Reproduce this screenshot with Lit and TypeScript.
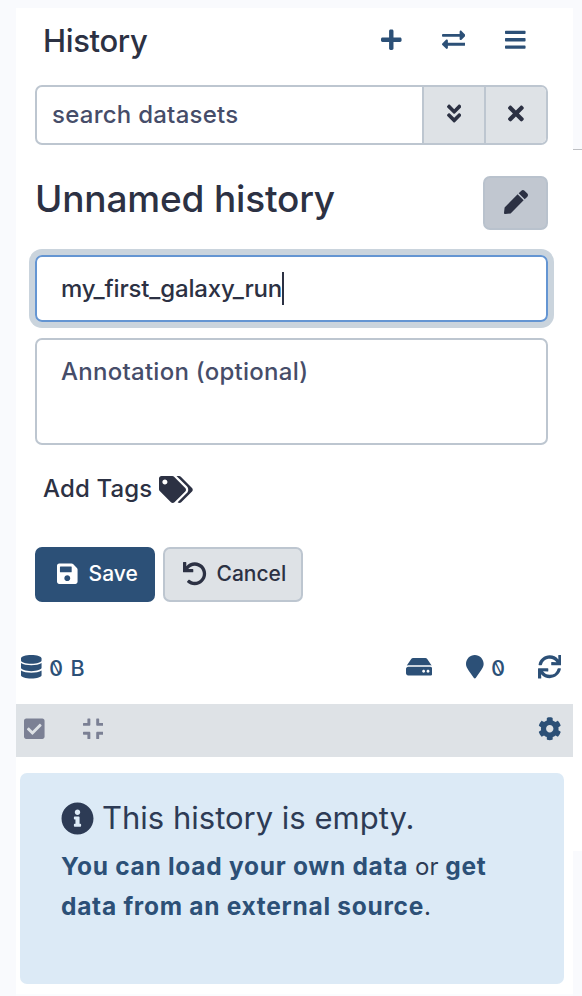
import { LitElement, html, css, svg } from "lit";
import { customElement, property } from "lit/decorators.js";

const ICONS: Record<string, [number, string]> = {
  plus: [448, "M416 208H272V64c0-17.67-14.33-32-32-32h-32c-17.67 0-32 14.33-32 32v144H32c-17.67 0-32 14.33-32 32v32c0 17.67 14.33 32 32 32h144v144c0 17.67 14.33 32 32 32h32c17.67 0 32-14.33 32-32V304h144c17.67 0 32-14.33 32-32v-32c0-17.67-14.33-32-32-32z"],
  exchange: [512, "M0 168v-16c0-13.255 10.745-24 24-24h360V80c0-21.367 25.899-32.042 40.971-16.971l80 80c9.372 9.373 9.372 24.569 0 33.941l-80 80C409.956 271.982 384 261.456 384 240v-48H24c-13.255 0-24-10.745-24-24zm488 152H128v-48c0-21.314-25.862-32.08-40.971-16.971l-80 80c-9.372 9.373-9.372 24.569 0 33.941l80 80C102.057 463.997 128 453.437 128 432v-48h360c13.255 0 24-10.745 24-24v-16c0-13.255-10.745-24-24-24z"],
  bars: [448, "M16 132h416c8.837 0 16-7.163 16-16V76c0-8.837-7.163-16-16-16H16C7.163 60 0 67.163 0 76v40c0 8.837 7.163 16 16 16zm0 160h416c8.837 0 16-7.163 16-16v-40c0-8.837-7.163-16-16-16H16c-8.837 0-16 7.163-16 16v40c0 8.837 7.163 16 16 16zm0 160h416c8.837 0 16-7.163 16-16v-40c0-8.837-7.163-16-16-16H16c-8.837 0-16 7.163-16 16v40c0 8.837 7.163 16 16 16z"],
  down: [320, "M143 256.3L7 120.3c-9.4-9.4-9.4-24.6 0-33.9l22.6-22.6c9.4-9.4 24.6-9.4 33.9 0l96.4 96.4 96.4-96.4c9.4-9.4 24.6-9.4 33.9 0L313 86.3c9.4 9.4 9.4 24.6 0 33.9l-136 136c-9.4 9.5-24.6 9.5-34 .1zm34 192l136-136c9.4-9.4 9.4-24.6 0-33.9l-22.6-22.6c-9.4-9.4-24.6-9.4-33.9 0L160 352.1l-96.4-96.4c-9.4-9.4-24.6-9.4-33.9 0L7 278.3c-9.4 9.4-9.4 24.6 0 33.9l136 136c9.4 9.5 24.6 9.5 34 .1z"],
  times: [352, "M242.72 256l100.07-100.07c12.28-12.28 12.28-32.19 0-44.48l-22.24-22.24c-12.28-12.28-32.19-12.28-44.48 0L176 189.28 75.93 89.21c-12.28-12.28-32.19-12.28-44.48 0L9.21 111.45c-12.28 12.28-12.28 32.19 0 44.48L109.28 256 9.21 356.07c-12.28 12.28-12.28 32.19 0 44.48l22.24 22.24c12.28 12.28 32.2 12.28 44.48 0L176 322.72l100.07 100.07c12.28 12.28 32.2 12.28 44.48 0l22.24-22.24c12.28-12.28 12.28-32.19 0-44.48L242.72 256z"],
  pen: [512, "M290.74 93.24l128.02 128.02-277.99 277.99-114.14 12.6C11.35 513.54-1.56 500.62.14 485.34l12.7-114.22 277.9-277.88zm207.2-19.06l-60.11-60.11c-18.75-18.75-49.16-18.75-67.91 0l-56.55 56.55 128.02 128.02 56.55-56.55c18.75-18.76 18.75-49.16 0-67.91z"],
  tags: [640, "M497.941 225.941L286.059 14.059A48 48 0 0 0 252.118 0H48C21.49 0 0 21.49 0 48v204.118a48 48 0 0 0 14.059 33.941l211.882 211.882c18.744 18.745 49.136 18.746 67.882 0l204.118-204.118c18.745-18.745 18.745-49.137 0-67.882zM112 160c-26.51 0-48-21.49-48-48s21.49-48 48-48 48 21.49 48 48-21.49 48-48 48zm513.941 133.823L421.823 497.941c-18.745 18.745-49.137 18.745-67.882 0l-.36-.36L527.64 323.522c16.999-16.999 26.36-39.6 26.36-63.64s-9.362-46.641-26.36-63.64L331.397 0h48.721a48 48 0 0 1 33.941 14.059l211.882 211.882c18.745 18.745 18.745 49.137 0 67.882z"],
  save: [448, "M433.941 129.941l-83.882-83.882A48 48 0 0 0 316.118 32H48C21.49 32 0 53.49 0 80v352c0 26.51 21.49 48 48 48h352c26.51 0 48-21.49 48-48V163.882a48 48 0 0 0-14.059-33.941zM224 416c-35.346 0-64-28.654-64-64 0-35.346 28.654-64 64-64s64 28.654 64 64c0 35.346-28.654 64-64 64zm96-304.52V212c0 6.627-5.373 12-12 12H76c-6.627 0-12-5.373-12-12V108c0-6.627 5.373-12 12-12h228.52c3.183 0 6.235 1.264 8.485 3.515l3.48 3.48A11.996 11.996 0 0 1 320 111.48z"],
  undo: [512, "M212.333 224.333H12c-6.627 0-12-5.373-12-12V12C0 5.373 5.373 0 12 0h48c6.627 0 12 5.373 12 12v78.112C117.773 39.279 184.26 7.47 258.175 8.007c136.906.994 246.448 111.623 246.157 248.532C504.041 393.258 393.12 504 256.333 504c-64.089 0-122.496-24.313-166.51-64.215-5.099-4.622-5.334-12.554-.467-17.42l33.967-33.967c4.474-4.474 11.662-4.717 16.401-.525C170.76 415.336 211.58 432 256.333 432c97.268 0 176-78.716 176-176 0-97.267-78.716-176-176-176-58.496 0-110.28 28.476-142.274 72.333h98.274c6.627 0 12 5.373 12 12v48c0 6.627-5.373 12-12 12z"],
  database: [448, "M448 73.143v45.714C448 159.143 347.667 192 224 192S0 159.143 0 118.857V73.143C0 32.857 100.333 0 224 0s224 32.857 224 73.143zM448 176v102.857C448 319.143 347.667 352 224 352S0 319.143 0 278.857V176c48.125 33.143 136.208 48.572 224 48.572S399.874 209.143 448 176zm0 160v102.857C448 479.143 347.667 512 224 512S0 479.143 0 438.857V336c48.125 33.143 136.208 48.572 224 48.572S399.874 369.143 448 336z"],
  hdd: [576, "M576 304v96c0 26.51-21.49 48-48 48H48c-26.51 0-48-21.49-48-48v-96c0-26.51 21.49-48 48-48h480c26.51 0 48 21.49 48 48zm-48-80a79.557 79.557 0 0 1 30.777 6.165L462.25 85.374A48.003 48.003 0 0 0 422.311 64H153.689a48 48 0 0 0-39.938 21.374L17.223 230.165A79.557 79.557 0 0 1 48 224h480zm-48 96c-17.673 0-32 14.327-32 32s14.327 32 32 32 32-14.327 32-32-14.327-32-32-32zm-96 0c-17.673 0-32 14.327-32 32s14.327 32 32 32 32-14.327 32-32-14.327-32-32-32z"],
  marker: [384, "M172.268 501.67C26.97 291.031 0 269.413 0 192 0 85.961 85.961 0 192 0s192 85.961 192 192c0 77.413-26.97 99.031-172.268 309.67-9.535 13.774-29.93 13.773-39.464 0z"],
  sync: [512, "M440.65 12.57l4 82.77A247.16 247.16 0 0 0 255.83 8C134.73 8 33.91 94.92 12.29 209.82A12 12 0 0 0 24.09 224h49.05a12 12 0 0 0 11.67-9.26 175.91 175.91 0 0 1 317-56.94l-101.46-4.86a12 12 0 0 0-12.57 12v47.41a12 12 0 0 0 12 12H500a12 12 0 0 0 12-12V12a12 12 0 0 0-12-12h-47.37a12 12 0 0 0-11.98 12.57zM255.83 432a175.61 175.61 0 0 1-146-77.8l101.8 4.87a12 12 0 0 0 12.57-12v-47.4a12 12 0 0 0-12-12H12a12 12 0 0 0-12 12V500a12 12 0 0 0 12 12h47.35a12 12 0 0 0 12-12.6l-4.15-82.57A247.17 247.17 0 0 0 255.83 504c121.11 0 221.93-86.92 243.55-201.82a12 12 0 0 0-11.8-14.18h-49.05a12 12 0 0 0-11.67 9.26A175.86 175.86 0 0 1 255.83 432z"],
  check: [448, "M400 480H48c-26.51 0-48-21.49-48-48V80c0-26.51 21.49-48 48-48h352c26.51 0 48 21.49 48 48v352c0 26.51-21.49 48-48 48zm-204.686-98.059l184-184c6.248-6.248 6.248-16.379 0-22.627l-22.627-22.627c-6.248-6.248-16.379-6.249-22.628 0L184 302.745l-70.059-70.059c-6.248-6.248-16.379-6.248-22.628 0l-22.627 22.627c-6.248 6.248-6.248 16.379 0 22.627l104 104c6.249 6.25 16.379 6.25 22.628.001z"],
  compress: [448, "M436 192H312c-13.3 0-24-10.7-24-24V44c0-6.6 5.4-12 12-12h40c6.6 0 12 5.4 12 12v84h84c6.6 0 12 5.4 12 12v40c0 6.6-5.4 12-12 12zm-276-24V44c0-6.6-5.4-12-12-12h-40c-6.6 0-12 5.4-12 12v84H12c-6.6 0-12 5.4-12 12v40c0 6.6 5.4 12 12 12h124c13.3 0 24-10.7 24-24zm0 300V344c0-13.3-10.7-24-24-24H12c-6.6 0-12 5.4-12 12v40c0 6.6 5.4 12 12 12h84v84c0 6.6 5.4 12 12 12h40c6.6 0 12-5.4 12-12zm192 0v-84h84c6.6 0 12-5.4 12-12v-40c0-6.6-5.4-12-12-12H312c-13.3 0-24 10.7-24 24v124c0 6.6 5.4 12 12 12h40c6.6 0 12-5.4 12-12z"],
  cog: [512, "M487.4 315.7l-42.6-24.6c4.3-23.2 4.3-47 0-70.2l42.6-24.6c4.9-2.8 7.1-8.6 5.5-14-11.1-35.6-30-67.8-54.7-94.6-3.8-4.1-10-5.1-14.8-2.3L380.8 110c-17.9-15.4-38.5-27.3-60.8-35.1V25.8c0-5.6-3.9-10.5-9.4-11.7-36.7-8.2-74.3-7.8-109.2 0-5.5 1.2-9.4 6.1-9.4 11.7V75c-22.2 7.9-42.8 19.8-60.8 35.1L88.7 85.5c-4.9-2.8-11-1.9-14.8 2.3-24.7 26.7-43.6 58.9-54.7 94.6-1.7 5.4.6 11.2 5.5 14L67.3 221c-4.3 23.2-4.3 47 0 70.2l-42.6 24.6c-4.9 2.8-7.1 8.6-5.5 14 11.1 35.6 30 67.8 54.7 94.6 3.8 4.1 10 5.1 14.8 2.3l42.6-24.6c17.9 15.4 38.5 27.3 60.8 35.1v49.2c0 5.6 3.9 10.5 9.4 11.7 36.7 8.2 74.3 7.8 109.2 0 5.5-1.2 9.4-6.1 9.4-11.7v-49.2c22.2-7.9 42.8-19.8 60.8-35.1l42.6 24.6c4.9 2.8 11 1.9 14.8-2.3 24.7-26.7 43.6-58.9 54.7-94.6 1.5-5.5-.7-11.3-5.6-14.1zM256 336c-44.1 0-80-35.9-80-80s35.9-80 80-80 80 35.9 80 80-35.9 80-80 80z"],
  info: [512, "M256 8C119.043 8 8 119.083 8 256c0 136.997 111.043 248 248 248s248-111.003 248-248C504 119.083 392.957 8 256 8zm0 110c23.196 0 42 18.804 42 42s-18.804 42-42 42-42-18.804-42-42 18.804-42 42-42zm56 254c0 6.627-5.373 12-12 12h-88c-6.627 0-12-5.373-12-12v-24c0-6.627 5.373-12 12-12h12v-64h-12c-6.627 0-12-5.373-12-12v-24c0-6.627 5.373-12 12-12h64c6.627 0 12 5.373 12 12v100h12c6.627 0 12 5.373 12 12v24z"],
};

@customElement("fa-icon")
export class FaIcon extends LitElement {
  @property() name = "plus";

  static styles = css`
    :host { display: inline-flex; height: 1em; flex: none; }
    .glyph { height: 1em; display: block; fill: currentColor; }
  `;

  render() {
    const [width, path] = ICONS[this.name];
    return html`<svg class="glyph" viewBox="0 0 ${width} 512">${svg`<path d=${path}></path>`}</svg>`;
  }
}

@customElement("app-root")
export class AppRoot extends LitElement {
  static styles = css`
    :host {
      display: grid;
      grid-template-columns: 16px 557px 9px;
      height: 996px;
      overflow: hidden;
      background: #fff;
      color: #2c3143;
      font-family: Inter, Roboto, "Liberation Sans", sans-serif;
      font-size: 24px;
      font-weight: 450;
      line-height: 40px;
      white-space: nowrap;
    }
    * { box-sizing: border-box; }
    .gutter { background: #f9fafd; }
    .edge { display: grid; grid-template-rows: 149px 1px 701px 145px; }
    .edge-top, .edge-bottom { background: #f9fafd; }
    .edge-rule { background: #bdbfc3; }
    .panel {
      border-top: 8px solid #f9fafd;
      border-bottom: 2px solid #fbfcfe;
      display: flex;
      flex-direction: column;
    }
    .header {
      height: 64px;
      margin: 0 47px 0 27px;
      display: flex;
      align-items: center;
      justify-content: space-between;
    }
    .title { font-size: 31px; letter-spacing: -0.35px; padding-top: 2px; }
    .actions { display: flex; align-items: center; gap: 40px; color: #2c5077; font-size: 23.5px; }
    .search {
      height: 60px;
      margin: 13px 25px 0 19px;
      display: grid;
      grid-template-columns: 385px 62px 1fr;
      border: 2px solid #bdc6d0;
      border-radius: 7px;
      overflow: hidden;
    }
    .query { padding: 8px 0 0 15px; color: #464d69; letter-spacing: 0.25px; }
    .addon {
      display: grid;
      place-items: center;
      border-left: 2px solid #bdc6d0;
      background: #dee2e6;
      font-size: 23px;
      padding-bottom: 3px;
    }
    .name-row {
      height: 54px;
      margin: 31px 25px 0 19px;
      display: flex;
      justify-content: space-between;
      align-items: center;
    }
    .name { font-size: 37px; letter-spacing: -0.17px; padding-bottom: 8px; }
    .edit {
      width: 65px;
      height: 54px;
      display: grid;
      place-items: center;
      background: #c1c7d0;
      border: 2px solid #b9c2cd;
      border-radius: 7px;
      font-size: 24px;
      padding-bottom: 2px;
    }
    .field {
      margin: 0 25px 0 19px;
      border: 2px solid #bdc6d0;
      border-radius: 7px;
      padding-left: 24px;
    }
    .focused {
      height: 67px;
      margin-top: 25px;
      display: flex;
      align-items: center;
      border-color: #6495d2;
      box-shadow: 0 0 0 6px #cad4dd;
    }
    .value { letter-spacing: -0.16px; }
    .caret { width: 2px; height: 33px; background: #2c3143; }
    .note { height: 107px; margin-top: 16px; padding-top: 12px; color: #464d69; letter-spacing: 0.27px; }
    .tags { margin: 24px 0 0 27px; height: 40px; display: flex; align-items: center; gap: 7px; letter-spacing: 0.15px; }
    .tag-icon { font-size: 27px; padding-bottom: 4px; }
    .buttons { margin: 38px 0 0 19px; display: flex; gap: 8px; font-size: 21px; }
    .button {
      height: 55px;
      display: flex;
      align-items: center;
      border: 2px solid #bdc6d0;
      border-radius: 7px;
      background: #dee2e6;
      padding: 0 0 1px 18px;
    }
    .cancel { width: 140px; gap: 10px; }
    .save { width: 120px; gap: 11px; padding-left: 20px; background: #2c5077; border-color: #2c5077; color: #fff; font-weight: 500; }
    .btn-icon { font-size: 23.5px; padding-bottom: 1px; }
    .stats {
      height: 40px;
      margin: 45px 12px 0 5px;
      display: flex;
      align-items: center;
      color: #2c5077;
      font-size: 23.5px;
    }
    .size { font-size: 21.5px; margin-left: 7px; display: flex; gap: 8px; padding-top: 1px; }
    .zero { display: inline-block; transform: scaleX(-1); font-feature-settings: "zero" 1; font-size: 21.5px; }
    .count { padding-top: 1px; }
    .spacer { flex: 1; }
    .marker { margin: 0 7px 0 33.5px; }
    .sync { margin-left: 33px; }
    .toolbar {
      height: 53px;
      margin-top: 17px;
      padding: 0 12px 3px 8px;
      display: flex;
      align-items: center;
      background: #dee2e6;
      color: #7b8094;
      font-size: 23.5px;
    }
    .compress { margin-left: 38px; }
    .cog { color: #2c5077; }
    .alert {
      height: 211px;
      margin: 16px 9px 0 4px;
      padding: 23px 41px 0;
      background: #dceaf6;
      border-radius: 7px;
      color: #2d3b55;
    }
    .alert-title { height: 44px; display: flex; align-items: center; gap: 8px; font-size: 31px; font-weight: 400; }
    .info { font-size: 33px; padding-bottom: 2px; }
    .alert-body { margin-top: 6px; font-weight: 400; }
    .line { height: 40px; }
    .link { color: #2c5077; font-weight: 700; font-size: 24.5px; letter-spacing: 0.72px; }
  `;

  render() {
    return html`
      <div class="gutter"></div>
      <main class="panel">
        <header class="header">
          <span class="title">History</span>
          <div class="actions">
            <fa-icon name="plus"></fa-icon>
            <fa-icon name="exchange"></fa-icon>
            <fa-icon name="bars"></fa-icon>
          </div>
        </header>
        <div class="search">
          <div class="query">search datasets</div>
          <div class="addon"><fa-icon name="down"></fa-icon></div>
          <div class="addon"><fa-icon name="times"></fa-icon></div>
        </div>
        <div class="name-row">
          <span class="name">Unnamed history</span>
          <div class="edit"><fa-icon name="pen"></fa-icon></div>
        </div>
        <div class="field focused">
          <span class="value">my_first_galaxy_run</span><span class="caret"></span>
        </div>
        <div class="field note">Annotation (optional)</div>
        <div class="tags"><span>Add Tags</span><fa-icon class="tag-icon" name="tags"></fa-icon></div>
        <div class="buttons">
          <div class="button save"><fa-icon class="btn-icon" name="save"></fa-icon><span>Save</span></div>
          <div class="button cancel"><fa-icon class="btn-icon" name="undo"></fa-icon><span>Cancel</span></div>
        </div>
        <div class="stats">
          <fa-icon name="database"></fa-icon>
          <span class="size"><span class="zero">0</span><span>B</span></span>
          <span class="spacer"></span>
          <fa-icon name="hdd"></fa-icon>
          <fa-icon class="marker" name="marker"></fa-icon>
          <span class="zero count">0</span>
          <fa-icon class="sync" name="sync"></fa-icon>
        </div>
        <div class="toolbar">
          <fa-icon name="check"></fa-icon>
          <fa-icon class="compress" name="compress"></fa-icon>
          <span class="spacer"></span>
          <fa-icon class="cog" name="cog"></fa-icon>
        </div>
        <section class="alert">
          <div class="alert-title"><fa-icon class="info" name="info"></fa-icon><span>This history is empty.</span></div>
          <div class="alert-body">
            <div class="line"><span class="link">You can load your own data</span> or <span class="link">get</span></div>
            <div class="line"><span class="link">data from an external source</span>.</div>
          </div>
        </section>
      </main>
      <div class="edge">
        <div class="edge-top"></div>
        <div class="edge-rule"></div>
        <div></div>
        <div class="edge-bottom"></div>
      </div>
    `;
  }
}
